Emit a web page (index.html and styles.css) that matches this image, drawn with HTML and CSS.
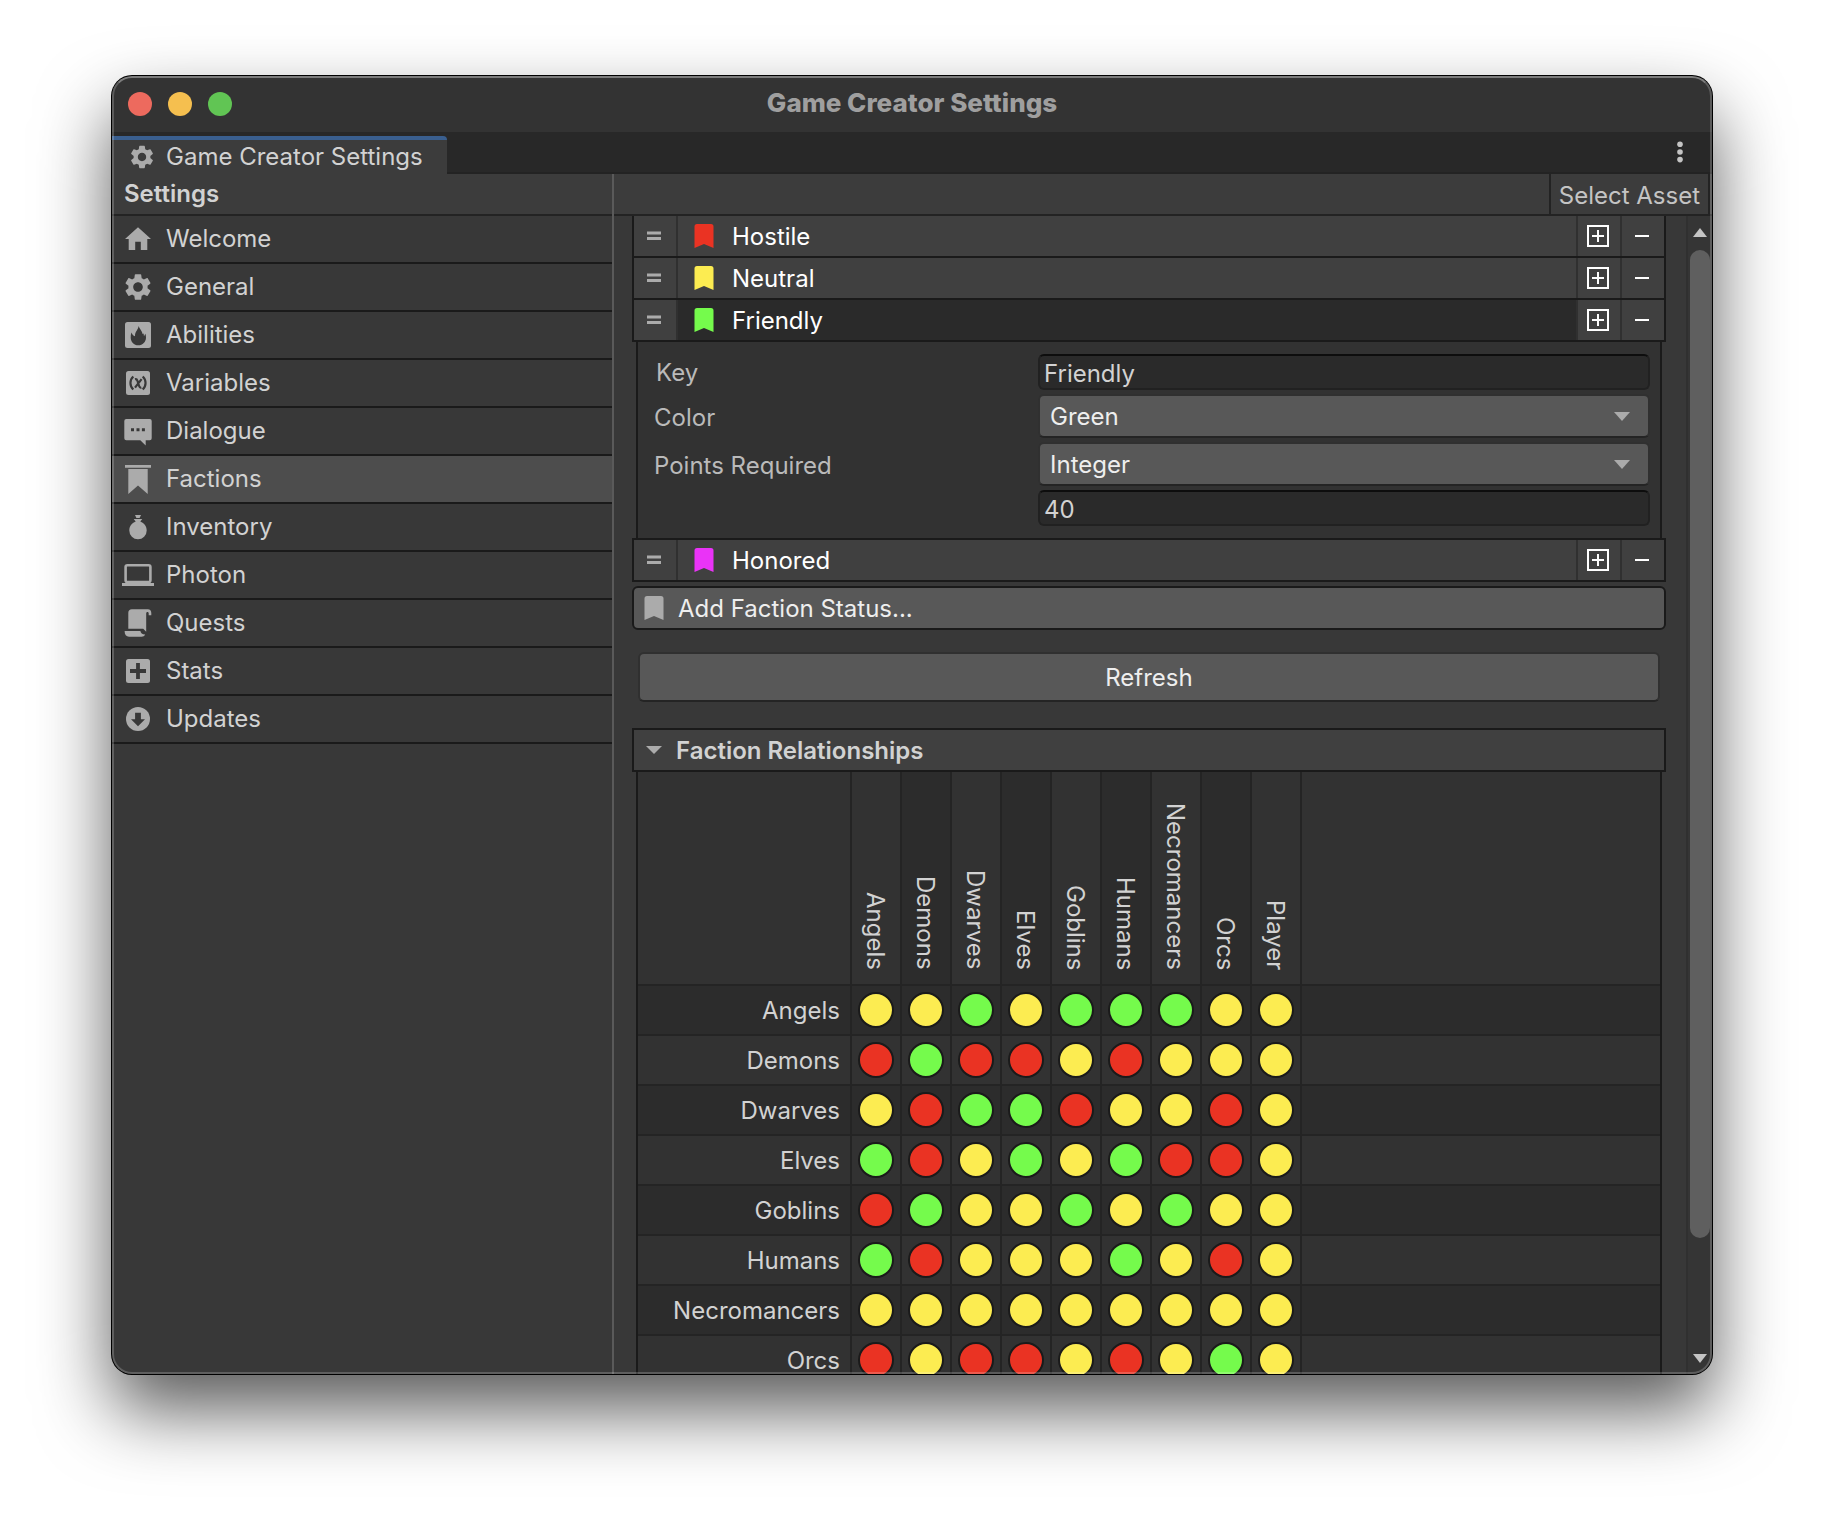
FILE: index.html
```html
<!DOCTYPE html>
<html lang="en">
<head>
<meta charset="utf-8">
<title>Game Creator Settings</title>
<link rel="stylesheet" href="styles.css">
</head>
<body>
<svg class="defs" aria-hidden="true">
  <symbol id="gear" viewBox="0 0 24 24"><path d="M19.14 12.94c.04-.3.06-.61.06-.94 0-.32-.02-.64-.07-.94l2.03-1.58c.18-.14.23-.41.12-.61l-1.92-3.32c-.12-.22-.37-.29-.59-.22l-2.39.96c-.5-.38-1.03-.7-1.62-.94l-.36-2.54c-.04-.24-.24-.41-.48-.41h-3.84c-.24 0-.43.17-.47.41l-.36 2.54c-.59.24-1.13.57-1.62.94l-2.39-.96c-.22-.08-.47 0-.59.22L2.74 8.87c-.12.21-.08.47.12.61l2.03 1.58c-.05.3-.09.63-.09.94s.02.64.07.94l-2.03 1.58c-.18.14-.23.41-.12.61l1.92 3.32c.12.22.37.29.59.22l2.39-.96c.5.38 1.03.7 1.62.94l.36 2.54c.05.24.24.41.48.41h3.84c.24 0 .44-.17.47-.41l.36-2.54c.59-.24 1.13-.56 1.62-.94l2.39.96c.22.08.47 0 .59-.22l1.92-3.32c.12-.22.07-.47-.12-.61l-2.01-1.58zM12 15.6c-1.98 0-3.6-1.62-3.6-3.6s1.62-3.6 3.6-3.6 3.6 1.62 3.6 3.6-1.62 3.6-3.6 3.6z"/></symbol>
  <symbol id="bookmark" viewBox="0 0 20 24"><path d="M3 0h14a2.500 2.500 0 0 1 2.500 2.500V24L10 20 .5 24V2.500A2.500 2.500 0 0 1 3 0z"/></symbol>
  <symbol id="handle" viewBox="0 0 14 10"><path d="M0 .5h14v3H0zM0 6h14v3H0z"/></symbol>
  <symbol id="duplicate" viewBox="0 0 22 22"><path d="M1 1h20v20H1z" fill="none" stroke="currentColor" stroke-width="2"/><path d="M10 5h2v5h5v2h-5v5h-2v-5H5v-2h5z"/></symbol>
  <symbol id="minus" viewBox="0 0 14 2"><path d="M0 0h14v2H0z"/></symbol>
</svg>
<main class="window">
  <header class="titlebar">
    <div class="lights">
      <button class="light light-close" aria-label="Close"></button>
      <button class="light light-min" aria-label="Minimize"></button>
      <button class="light light-zoom" aria-label="Zoom"></button>
    </div>
    <h1 class="title">Game Creator Settings</h1>
  </header>
  <div class="tabbar">
    <button class="tab"><svg class="tab-icon"><use href="#gear"/></svg>Game Creator Settings</button>
    <button class="kebab" aria-label="Menu"><svg width="6" height="22" viewBox="0 0 6 22"><circle cx="3" cy="3.200" r="2.800"/><circle cx="3" cy="11" r="2.800"/><circle cx="3" cy="18.600" r="2.800"/></svg></button>
  </div>
  <div class="panes">
    <aside class="sidebar">
      <h2 class="sidebar-title">Settings</h2>
      <nav class="nav">
        <button class="nav-item"><svg class="icon" viewBox="0 0 32 32"><path d="M16 4.300 29 16h-3.700v11h-6.500v-8.300h-5.600V27H6.700V16H3z"/></svg>Welcome</button>
        <button class="nav-item"><svg class="icon"><use href="#gear"/></svg>General</button>
        <button class="nav-item"><svg class="icon" viewBox="0 0 32 32"><rect x="3" y="3" width="26" height="26" rx="2.500"/><path class="cut" d="M16.500 7C16.500 10.500 12.800 12.500 13 17.200 11.300 16.800 10.200 15.500 9.400 13.500 8.800 15.300 8.700 17 8.700 18.500 8.700 23 12 26.300 16.300 26.300S24 23 24 18.500C24 17 23.800 16 23.400 14.800L22 17.200 21.600 14.500 20.600 15C20.300 12 17.500 10 16.500 7z"/></svg>Abilities</button>
        <button class="nav-item"><svg class="icon" viewBox="0 0 32 32"><rect x="4" y="4" width="24" height="24" rx="2.500"/><path class="cut-line" d="M11.300 9.500c-3.800 3.500-3.800 9.500 0 13M20.700 9.500c3.800 3.500 3.800 9.500 0 13M13 12.200c1.400-.4 2 .3 2.400 1.600l1.700 5.200c.4 1.300 1 2 2.300 1.600M19.600 12.200 13 20.700"/></svg>Variables</button>
        <button class="nav-item"><svg class="icon" viewBox="0 0 32 32"><path d="M4.300 4h23.400a2 2 0 0 1 2 2v17.200a2 2 0 0 1-2 2h-4v5.200l-5.400-5.200h-14a2 2 0 0 1-2-2V6a2 2 0 0 1 2-2z"/><path class="cut" d="M9 13.200h3v3H9zM14.500 13.200h3v3h-3zM19.900 13.200h3v3h-3z"/></svg>Dialogue</button>
        <button class="nav-item selected"><svg class="icon" viewBox="0 0 32 32"><path d="M3 2h26v2.700H3zM6.300 6h19.400v25L16 22.500 6.300 31z"/></svg>Factions</button>
        <button class="nav-item"><svg class="icon" viewBox="0 0 32 32"><path d="M13 4h6l-1.400 3h-3.200zM11.700 8h8.600l-2 2.500c4 1.500 6.400 5 6.400 9A8.700 8.700 0 0 1 16 28.200a8.700 8.700 0 0 1-8.700-8.700c0-4 2.400-7.500 6.400-9z"/></svg>Inventory</button>
        <button class="nav-item"><svg class="icon" viewBox="0 0 32 32"><rect x="3.600" y="6.300" width="24.800" height="16.700" rx="1.800" fill="none" stroke="currentColor" stroke-width="2.600"/><path d="M0 24h32v3H0z"/></svg>Photon</button>
        <button class="nav-item"><svg class="icon" viewBox="0 0 32 32"><path d="M9.800 2.300h16c2.300 0 3.500 1.600 3.500 3.700v2.200h-2.600V6.500c0-.9-.4-1.500-1.200-1.500-.9 0-1.300.6-1.300 1.500v18.300l-3-3H6.300V5.800c0-2.100 1.400-3.500 3.500-3.500z"/><path d="M2.600 24h15.800c.2 2 1.700 3.300 4.800 3.500-.8 1.500-2 2.200-3.600 2.200H7c-2.800 0-4.400-2-4.400-5.700z"/></svg>Quests</button>
        <button class="nav-item"><svg class="icon" viewBox="0 0 32 32"><rect x="4" y="4" width="24" height="24" rx="2.500"/><path class="cut" d="M14.100 8h3.800v6.100H24v3.800h-6.100V24h-3.800v-6.100H8v-3.800h6.100z"/></svg>Stats</button>
        <button class="nav-item"><svg class="icon" viewBox="0 0 32 32"><circle cx="16" cy="16" r="12"/><path class="cut" d="M13.100 9.700h5.800v6.500H23l-7 7-7-7h4.100z"/></svg>Updates</button>
      </nav>
    </aside>
    <section class="content">
      <div class="toolbar"><button class="select-asset">Select Asset</button></div>
      <div class="scroller">
        <div class="viewport">
          <div class="status-list">
            <div class="status">
              <button class="status-handle" aria-label="Reorder"><svg width="14" height="10"><use href="#handle"/></svg></button>
              <button class="status-name"><svg class="flag red" width="20" height="24"><use href="#bookmark"/></svg><span class="caption">Hostile</span></button>
              <button class="status-action" aria-label="Duplicate"><svg width="22" height="22"><use href="#duplicate"/></svg></button>
              <button class="status-action" aria-label="Remove"><svg width="14" height="2"><use href="#minus"/></svg></button>
            </div>
            <div class="status">
              <button class="status-handle" aria-label="Reorder"><svg width="14" height="10"><use href="#handle"/></svg></button>
              <button class="status-name"><svg class="flag yellow" width="20" height="24"><use href="#bookmark"/></svg><span class="caption">Neutral</span></button>
              <button class="status-action" aria-label="Duplicate"><svg width="22" height="22"><use href="#duplicate"/></svg></button>
              <button class="status-action" aria-label="Remove"><svg width="14" height="2"><use href="#minus"/></svg></button>
            </div>
            <div class="status">
              <button class="status-handle" aria-label="Reorder"><svg width="14" height="10"><use href="#handle"/></svg></button>
              <button class="status-name open"><svg class="flag green" width="20" height="24"><use href="#bookmark"/></svg><span class="caption">Friendly</span></button>
              <button class="status-action" aria-label="Duplicate"><svg width="22" height="22"><use href="#duplicate"/></svg></button>
              <button class="status-action" aria-label="Remove"><svg width="14" height="2"><use href="#minus"/></svg></button>
            </div>
            <form class="status-body">
              <label class="label label-text" for="key">Key</label>
              <input class="field" id="key" type="text" value="Friendly">
              <label class="label" for="color">Color</label>
              <div class="dropdown"><select class="dropdown-select" id="color"><option>Green</option></select></div>
              <label class="label" for="points">Points Required</label>
              <div class="dropdown"><select class="dropdown-select" id="points"><option>Integer</option></select></div>
              <input class="field field-value" type="text" value="40" aria-label="Points">
            </form>
            <div class="status">
              <button class="status-handle" aria-label="Reorder"><svg width="14" height="10"><use href="#handle"/></svg></button>
              <button class="status-name"><svg class="flag magenta" width="20" height="24"><use href="#bookmark"/></svg><span class="caption">Honored</span></button>
              <button class="status-action" aria-label="Duplicate"><svg width="22" height="22"><use href="#duplicate"/></svg></button>
              <button class="status-action" aria-label="Remove"><svg width="14" height="2"><use href="#minus"/></svg></button>
            </div>
          </div>
          <button class="add"><svg width="20" height="24"><use href="#bookmark"/></svg><span class="caption">Add Faction Status...</span></button>
          <button class="refresh">Refresh</button>
          <button class="foldout"><svg width="16" height="8" viewBox="0 0 16 8"><path d="M0 0h16L8 8z"/></svg><span class="caption">Faction Relationships</span></button>
          <div class="matrix-box">
            <table class="matrix">
              <thead>
                <tr><td class="corner"></td><th><span>Angels</span></th><th><span>Demons</span></th><th><span>Dwarves</span></th><th><span>Elves</span></th><th><span>Goblins</span></th><th><span>Humans</span></th><th><span>Necromancers</span></th><th><span>Orcs</span></th><th><span>Player</span></th><td class="rest"></td></tr>
              </thead>
              <tbody>
                <tr><th>Angels</th><td><button class="dot yellow"></button></td><td><button class="dot yellow"></button></td><td><button class="dot green"></button></td><td><button class="dot yellow"></button></td><td><button class="dot green"></button></td><td><button class="dot green"></button></td><td><button class="dot green"></button></td><td><button class="dot yellow"></button></td><td><button class="dot yellow"></button></td><td class="rest"></td></tr>
                <tr><th>Demons</th><td><button class="dot red"></button></td><td><button class="dot green"></button></td><td><button class="dot red"></button></td><td><button class="dot red"></button></td><td><button class="dot yellow"></button></td><td><button class="dot red"></button></td><td><button class="dot yellow"></button></td><td><button class="dot yellow"></button></td><td><button class="dot yellow"></button></td><td class="rest"></td></tr>
                <tr><th>Dwarves</th><td><button class="dot yellow"></button></td><td><button class="dot red"></button></td><td><button class="dot green"></button></td><td><button class="dot green"></button></td><td><button class="dot red"></button></td><td><button class="dot yellow"></button></td><td><button class="dot yellow"></button></td><td><button class="dot red"></button></td><td><button class="dot yellow"></button></td><td class="rest"></td></tr>
                <tr><th>Elves</th><td><button class="dot green"></button></td><td><button class="dot red"></button></td><td><button class="dot yellow"></button></td><td><button class="dot green"></button></td><td><button class="dot yellow"></button></td><td><button class="dot green"></button></td><td><button class="dot red"></button></td><td><button class="dot red"></button></td><td><button class="dot yellow"></button></td><td class="rest"></td></tr>
                <tr><th>Goblins</th><td><button class="dot red"></button></td><td><button class="dot green"></button></td><td><button class="dot yellow"></button></td><td><button class="dot yellow"></button></td><td><button class="dot green"></button></td><td><button class="dot yellow"></button></td><td><button class="dot green"></button></td><td><button class="dot yellow"></button></td><td><button class="dot yellow"></button></td><td class="rest"></td></tr>
                <tr><th>Humans</th><td><button class="dot green"></button></td><td><button class="dot red"></button></td><td><button class="dot yellow"></button></td><td><button class="dot yellow"></button></td><td><button class="dot yellow"></button></td><td><button class="dot green"></button></td><td><button class="dot yellow"></button></td><td><button class="dot red"></button></td><td><button class="dot yellow"></button></td><td class="rest"></td></tr>
                <tr><th>Necromancers</th><td><button class="dot yellow"></button></td><td><button class="dot yellow"></button></td><td><button class="dot yellow"></button></td><td><button class="dot yellow"></button></td><td><button class="dot yellow"></button></td><td><button class="dot yellow"></button></td><td><button class="dot yellow"></button></td><td><button class="dot yellow"></button></td><td><button class="dot yellow"></button></td><td class="rest"></td></tr>
                <tr><th>Orcs</th><td><button class="dot red"></button></td><td><button class="dot yellow"></button></td><td><button class="dot red"></button></td><td><button class="dot red"></button></td><td><button class="dot yellow"></button></td><td><button class="dot red"></button></td><td><button class="dot yellow"></button></td><td><button class="dot green"></button></td><td><button class="dot yellow"></button></td><td class="rest"></td></tr>
              </tbody>
            </table>
          </div>
        </div>
        <div class="scrollbar">
          <button class="scroll-arrow" aria-label="Scroll up"><svg width="14" height="9" viewBox="0 0 14 9"><path d="M0 9h14L7 0z"/></svg></button>
          <div class="scroll-track"><div class="scroll-thumb"></div></div>
          <button class="scroll-arrow" aria-label="Scroll down"><svg width="14" height="9" viewBox="0 0 14 9"><path d="M0 0h14L7 9z"/></svg></button>
        </div>
      </div>
    </section>
  </div>
</main>
</body>
</html>
```

FILE: styles.css
```css
* { box-sizing: border-box; }

body {
  margin: 0;
  height: 100vh;
  padding: 76px 112px 148px;
  display: flex;
  background: #fff;
  color: #d2d2d2;
  font: 24px/32px Inter, "Liberation Sans", sans-serif;
  font-optical-sizing: none;
  overflow: hidden;
}

button, input, select {
  margin: 0;
  padding: 0;
  border: 0;
  border-radius: 0;
  background: none;
  color: inherit;
  font: inherit;
  font-optical-sizing: none;
  text-align: left;
}

svg { display: block; flex: none; fill: currentColor; }
.defs { display: none; }

.window {
  position: relative;
  flex: 1;
  min-width: 0;
  display: flex;
  flex-direction: column;
  overflow: hidden;
  border-radius: 20px;
  background: #383838;
  box-shadow: 0 0 0 1px #000, 0 36px 72px rgba(0, 0, 0, .65);
}

/* light rim drawn over the window's edge */
.window::after {
  content: "";
  position: absolute;
  inset: 0;
  border: 2px solid rgba(255, 255, 255, .2);
  border-top-color: rgba(255, 255, 255, .36);
  border-radius: 20px;
  pointer-events: none;
}

.titlebar {
  display: grid;
  grid-template-columns: 1fr auto 1fr;
  align-items: center;
  height: 56px;
  flex: none;
  padding: 0 16px;
  background: #333;
}
.lights { display: flex; gap: 16px; }
.light { width: 24px; height: 24px; border-radius: 50%; }
.light-close { background: #ed6a5e; }
.light-min { background: #f5bf4f; }
.light-zoom { background: #61c554; }
.title { margin: 0; padding-bottom: 2px; color: #9f9f9f; font-size: 26px; font-weight: 800; line-height: 32px; }

.tabbar {
  display: flex;
  justify-content: space-between;
  height: 42px;
  flex: none;
  padding-top: 4px;
  background: #282828;
  box-shadow: inset 0 -2px #232323;
}
.tab {
  display: flex;
  align-items: center;
  gap: 10px;
  padding: 0 24px 0 16px;
  border-top: 4px solid #3a5f8f;
  border-top-right-radius: 4px;
  background: #3c3c3c;
}
.tab-icon { width: 28px; height: 28px; color: #ababab; }
.kebab { display: flex; align-items: center; justify-content: center; width: 36px; height: 32px; margin-right: 14px; color: #c4c4c4; }

.panes { display: flex; flex: 1; min-height: 0; }

.sidebar { display: flex; flex-direction: column; width: 502px; flex: none; border-right: 2px solid #5a5a5a; }
.sidebar-title {
  height: 42px;
  margin: 0;
  padding: 4px 12px 0;
  border-bottom: 2px solid #232323;
  background: #3c3c3c;
  font-size: 24px;
  font-weight: 600;
  line-height: 32px;
}
.nav { display: flex; flex-direction: column; }
.nav-item {
  display: flex;
  align-items: center;
  gap: 12px;
  height: 48px;
  padding: 0 10px;
  border-bottom: 2px solid #1a1a1a;
}
.nav-item.selected { background: #4d4d4d; }
.icon { width: 32px; height: 32px; color: #ababab; }
.cut { fill: #383838; }
.cut-line { fill: none; stroke: #383838; stroke-width: 2.2; }

.content { display: flex; flex: 1; flex-direction: column; min-width: 0; }
.toolbar {
  display: flex;
  justify-content: flex-end;
  height: 42px;
  flex: none;
  padding-right: 2px;
  border-bottom: 2px solid #232323;
  background: #3c3c3c;
}
.select-asset { padding: 4px 8px 0; border: solid #232323; border-width: 0 2px; color: #c4c4c4; }

.scroller { display: flex; flex: 1; min-height: 0; }
.viewport { flex: 1; min-width: 0; padding: 0 20px 0 18px; overflow: hidden; }

/* captions sit slightly below the icons' centre line */
.caption { padding-top: 2px; }

.status { display: flex; height: 42px; border: solid #1a1a1a; border-width: 0 2px 2px; background: #404040; }
.status-handle { display: flex; align-items: center; justify-content: center; width: 44px; padding-right: 2px; border-right: 2px solid #303030; color: #ababab; }
.status-name { display: flex; flex: 1; align-items: center; gap: 18px; padding-left: 16px; color: #fff; }
.status-name.open { background: #2a2a2a; }
.status-action { display: flex; align-items: center; justify-content: center; width: 44px; padding-right: 2px; border-left: 2px solid #303030; color: #fff; }

.red { color: #ea3323; background-color: currentColor; }
.yellow { color: #fcec51; background-color: currentColor; }
.green { color: #75fb4c; background-color: currentColor; }
.magenta { color: #ea33f7; }
.flag { background: none; }

.status-body {
  display: grid;
  grid-template-columns: 384px 1fr;
  row-gap: 4px;
  margin: 0 4px;
  padding: 12px 10px 12px 16px;
  border: solid #1a1a1a;
  border-width: 0 2px;
  background: #323232;
  color: #bababa;
}
/* the box closes on the next row's top line */
.status-body + .status { height: 44px; border-top-width: 2px; }
.label { align-self: center; padding-top: 4px; }
.label-text { padding: 2px 0 0 2px; }
.field {
  width: 100%;
  height: 36px;
  padding: 2px 4px 0;
  border: 2px solid #212121;
  border-top-color: #0d0d0d;
  border-radius: 6px;
  background: #2a2a2a;
  color: #d2d2d2;
}
.field-value { grid-column: 2; }
.dropdown { position: relative; height: 44px; }
.dropdown::after {
  content: "";
  position: absolute;
  top: 18px;
  right: 20px;
  border: 8px solid transparent;
  border-top: 9px solid #ababab;
  border-bottom: 0;
  pointer-events: none;
}
.dropdown-select {
  width: 100%;
  height: 44px;
  padding: 2px 10px 0;
  border: 2px solid #303030;
  border-bottom-color: #242424;
  border-radius: 6px;
  background: #585858;
  color: #eee;
  appearance: none;
}

.add {
  display: flex;
  align-items: center;
  gap: 14px;
  width: 100%;
  height: 44px;
  margin-top: 4px;
  padding: 0 10px;
  border: 2px solid #1a1a1a;
  border-radius: 6px;
  background: #585858;
  color: #eee;
}
.add svg { color: #ababab; }
.refresh {
  display: block;
  width: calc(100% - 12px);
  height: 50px;
  margin: 22px 6px 26px;
  padding-top: 2px;
  border: 2px solid #303030;
  border-bottom-color: #242424;
  border-radius: 6px;
  background: #585858;
  color: #eee;
  text-align: center;
}
.foldout {
  display: flex;
  align-items: center;
  gap: 14px;
  width: 100%;
  height: 44px;
  padding: 0 12px;
  border: 2px solid #1a1a1a;
  background: #404040;
  font-weight: 600;
}
.foldout svg { color: #ababab; }

.matrix-box { margin: 0 4px; border: solid #1a1a1a; border-width: 0 2px; background: #323232; }
.matrix { width: 100%; border-collapse: separate; border-spacing: 0; table-layout: fixed; }
.matrix th, .matrix td { width: 50px; height: 50px; padding: 0; border: solid #242424; border-width: 0 2px 2px 0; font-weight: 400; }
.matrix .rest { width: auto; border-right: 0; }
.matrix .corner { width: 214px; }
.matrix thead th, .matrix thead td { height: 214px; }
.matrix thead th { padding: 0 2px 14px 0; vertical-align: bottom; }
.matrix thead th span { display: block; margin: 0 auto; width: 32px; writing-mode: vertical-rl; text-align: right; }
.matrix thead th:nth-child(odd) { background: #2c2c2c; }
.matrix tbody th { padding: 2px 10px 0 0; text-align: right; }
.matrix tbody tr:nth-child(odd) { background: #2c2c2c; }
.dot { display: block; width: 36px; height: 36px; margin: 0 auto; border: 2px solid #1a1a1a; border-radius: 50%; }

.scrollbar { display: flex; flex-direction: column; width: 26px; flex: none; border-left: 2px solid #303030; background: #353535; }
.scroll-arrow { display: flex; justify-content: center; align-items: center; width: 24px; height: 32px; }
.scroll-arrow { color: #c4c4c4; }
.scroll-track { flex: 1; padding: 2px 2px 0; }
.scroll-thumb { width: 20px; height: 90.5%; border-radius: 10px; background: #5f5f5f; }
```
